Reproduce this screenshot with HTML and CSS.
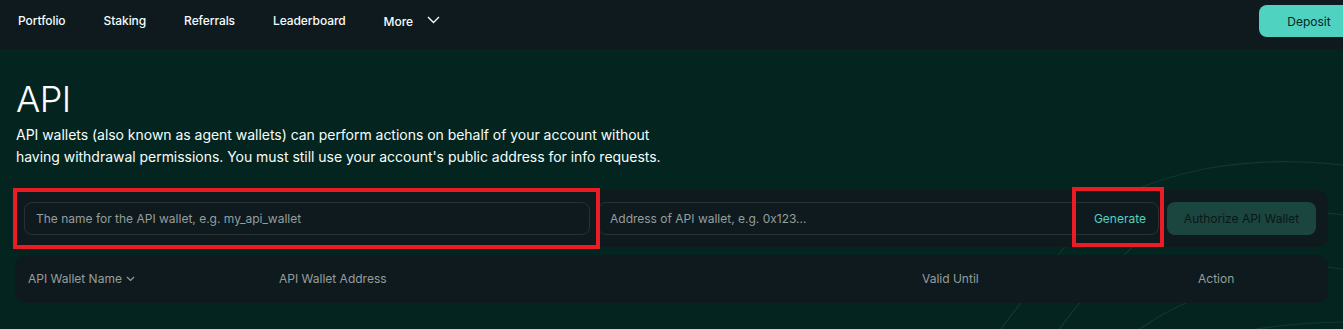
FILE: index.html
```html
<!DOCTYPE html>
<html lang="en">
<head>
<meta charset="utf-8">
<title>API</title>
<link rel="stylesheet" href="styles.css">
</head>
<body>
<div class="page">
  <svg class="bg-lines" width="1343" height="329" viewBox="0 0 1343 329" aria-hidden="true">
    <path d="M1095 208 C1165 172 1245 150 1365 168"/>
    <path d="M1180 206 Q1265 204 1360 217"/>
    <path d="M1250 258 Q1300 262 1360 272"/>
    <path d="M985 350 Q1030 290 1090 215"/>
    <path d="M1045 350 Q1080 295 1140 240"/>
    <path d="M1120 345 Q1170 300 1250 282"/>
    <path d="M1225 335 Q1290 321 1360 322"/>
  </svg>

  <header class="nav">
    <nav class="nav-links">
      <a class="nav-link" href="#">Portfolio</a>
      <a class="nav-link" href="#">Staking</a>
      <a class="nav-link" href="#">Referrals</a>
      <a class="nav-link" href="#">Leaderboard</a>
      <a class="nav-link nav-more" href="#">More
        <svg class="chev" width="13" height="8" viewBox="0 0 13 8"><path d="M1 1 L6.5 6.5 L12 1"/></svg>
      </a>
    </nav>
    <button class="deposit">Deposit</button>
  </header>

  <main class="main">
    <h1 class="title">API</h1>
    <p class="desc">API wallets (also known as agent wallets) can perform actions on behalf of your account without<br>having withdrawal permissions. You must still use your account's public address for info requests.</p>

    <section class="form-card">
      <div class="field field-name">
        <input class="field-input" type="text" placeholder="The name for the API wallet, e.g. my_api_wallet">
      </div>
      <div class="field field-addr">
        <input class="field-input" type="text" placeholder="Address of API wallet, e.g. 0x123...">
        <button class="generate">Generate</button>
      </div>
      <button class="authorize">Authorize API Wallet</button>
    </section>

    <section class="table-card">
      <div class="th th-sort">API Wallet Name
        <svg class="sort-chev" width="9" height="6" viewBox="0 0 9 6"><path d="M1 1 L4.5 4.5 L8 1"/></svg>
      </div>
      <div class="th">API Wallet Address</div>
      <div class="th">Valid Until</div>
      <div class="th">Action</div>
    </section>
  </main>

  <div class="mark mark-name"></div>
  <div class="mark mark-generate"></div>
</div>
</body>
</html>
```

FILE: styles.css
```css
* { box-sizing: border-box; }

html, body {
  margin: 0;
  padding: 0;
  background: #04251f;
  overflow: hidden;
}

body {
  font-family: Inter, "Noto Sans", sans-serif;
  color: #f6fefd;
}

.page {
  position: relative;
  width: 1343px;
  height: 329px;
  overflow: hidden;
}

.bg-lines {
  position: absolute;
  left: 0;
  top: 0;
  z-index: 0;
  pointer-events: none;
}
.bg-lines path {
  fill: none;
  stroke: #12372f;
  stroke-width: 1.2;
}

.nav {
  position: relative;
  z-index: 1;
  height: 49px;
  background: #0f1a1f;
  display: flex;
  align-items: flex-start;
  padding-top: 5px;
}

.nav-links {
  display: flex;
  align-items: center;
  height: 32px;
  padding-left: 18px;
  gap: 38px;
}

.nav-link {
  color: #f6fefd;
  text-decoration: none;
  font-size: 12px;
  font-weight: 500;
  letter-spacing: -0.08px;
  line-height: 16px;
  margin-top: -1px;
}

.nav-more {
  display: flex;
  align-items: center;
  gap: 14px;
  margin-top: 1px;
}
.nav-more .chev {
  margin-top: -3px;
}
.chev path {
  fill: none;
  stroke: #f6fefd;
  stroke-width: 1.4;
}

.deposit {
  margin-left: auto;
  margin-right: -16px;
  width: 100px;
  height: 32px;
  border: none;
  border-radius: 8px;
  background: #50d2c1;
  color: #04251f;
  font-family: inherit;
  font-size: 12px;
  font-weight: 400;
  padding: 0;
}

.main {
  position: relative;
  z-index: 1;
  padding: 28px 15px 0 15px;
}

.title {
  margin: 0 0 0 1px;
  font-size: 36px;
  font-weight: 300;
  line-height: 44px;
  color: #ffffff;
  letter-spacing: -0.5px;
}

.desc {
  margin: 3px 0 0 1px;
  font-size: 14px;
  line-height: 22px;
  color: #f6fefd;
  white-space: nowrap;
  letter-spacing: -0.03px;
}

.form-card {
  margin-top: 22px;
  width: 1313px;
  background: #0f1a1f;
  border-radius: 10px;
  padding: 12px 12px 12px 9px;
  display: flex;
  gap: 8px;
}

.field {
  display: flex;
  align-items: center;
  height: 33px;
  border: 1px solid #273035;
  border-radius: 8px;
  padding: 0 12px 0 11px;
}
.field-name {
  flex: 0 0 566px;
}
.field-addr {
  flex: 1 1 0;
}

.field-input {
  flex: 1;
  min-width: 0;
  height: 100%;
  border: none;
  outline: none;
  background: transparent;
  color: #f6fefd;
  font-family: inherit;
  font-size: 12px;
  padding: 0;
}
.field-input::placeholder {
  color: #949e9c;
  opacity: 1;
}

.generate {
  border: none;
  background: transparent;
  color: #50d2c1;
  font-family: inherit;
  font-size: 12px;
  padding: 0;
}

.authorize {
  flex: 0 0 149px;
  height: 33px;
  border: none;
  border-radius: 8px;
  background: #1a463f;
  color: #0a1718;
  font-family: inherit;
  font-size: 12px;
  padding: 0;
  cursor: not-allowed;
}

.table-card {
  margin-top: 8px;
  width: 1313px;
  height: 48px;
  background: #0f1a1f;
  border-radius: 10px;
  padding-left: 13px;
  display: grid;
  grid-template-columns: 251px 643px 276px 1fr;
  align-items: center;
}

.th {
  font-size: 12px;
  color: #949e9c;
  margin-top: -1px;
}

.th-sort {
  display: flex;
  align-items: center;
  gap: 4px;
}
.sort-chev path {
  fill: none;
  stroke: #949e9c;
  stroke-width: 1.2;
}

.mark {
  position: absolute;
  z-index: 2;
  border: 4px solid #ec1c24;
  pointer-events: none;
}
.mark-name {
  left: 13px;
  top: 188px;
  width: 587px;
  height: 61px;
}
.mark-generate {
  left: 1072px;
  top: 187px;
  width: 92px;
  height: 60px;
}
```
